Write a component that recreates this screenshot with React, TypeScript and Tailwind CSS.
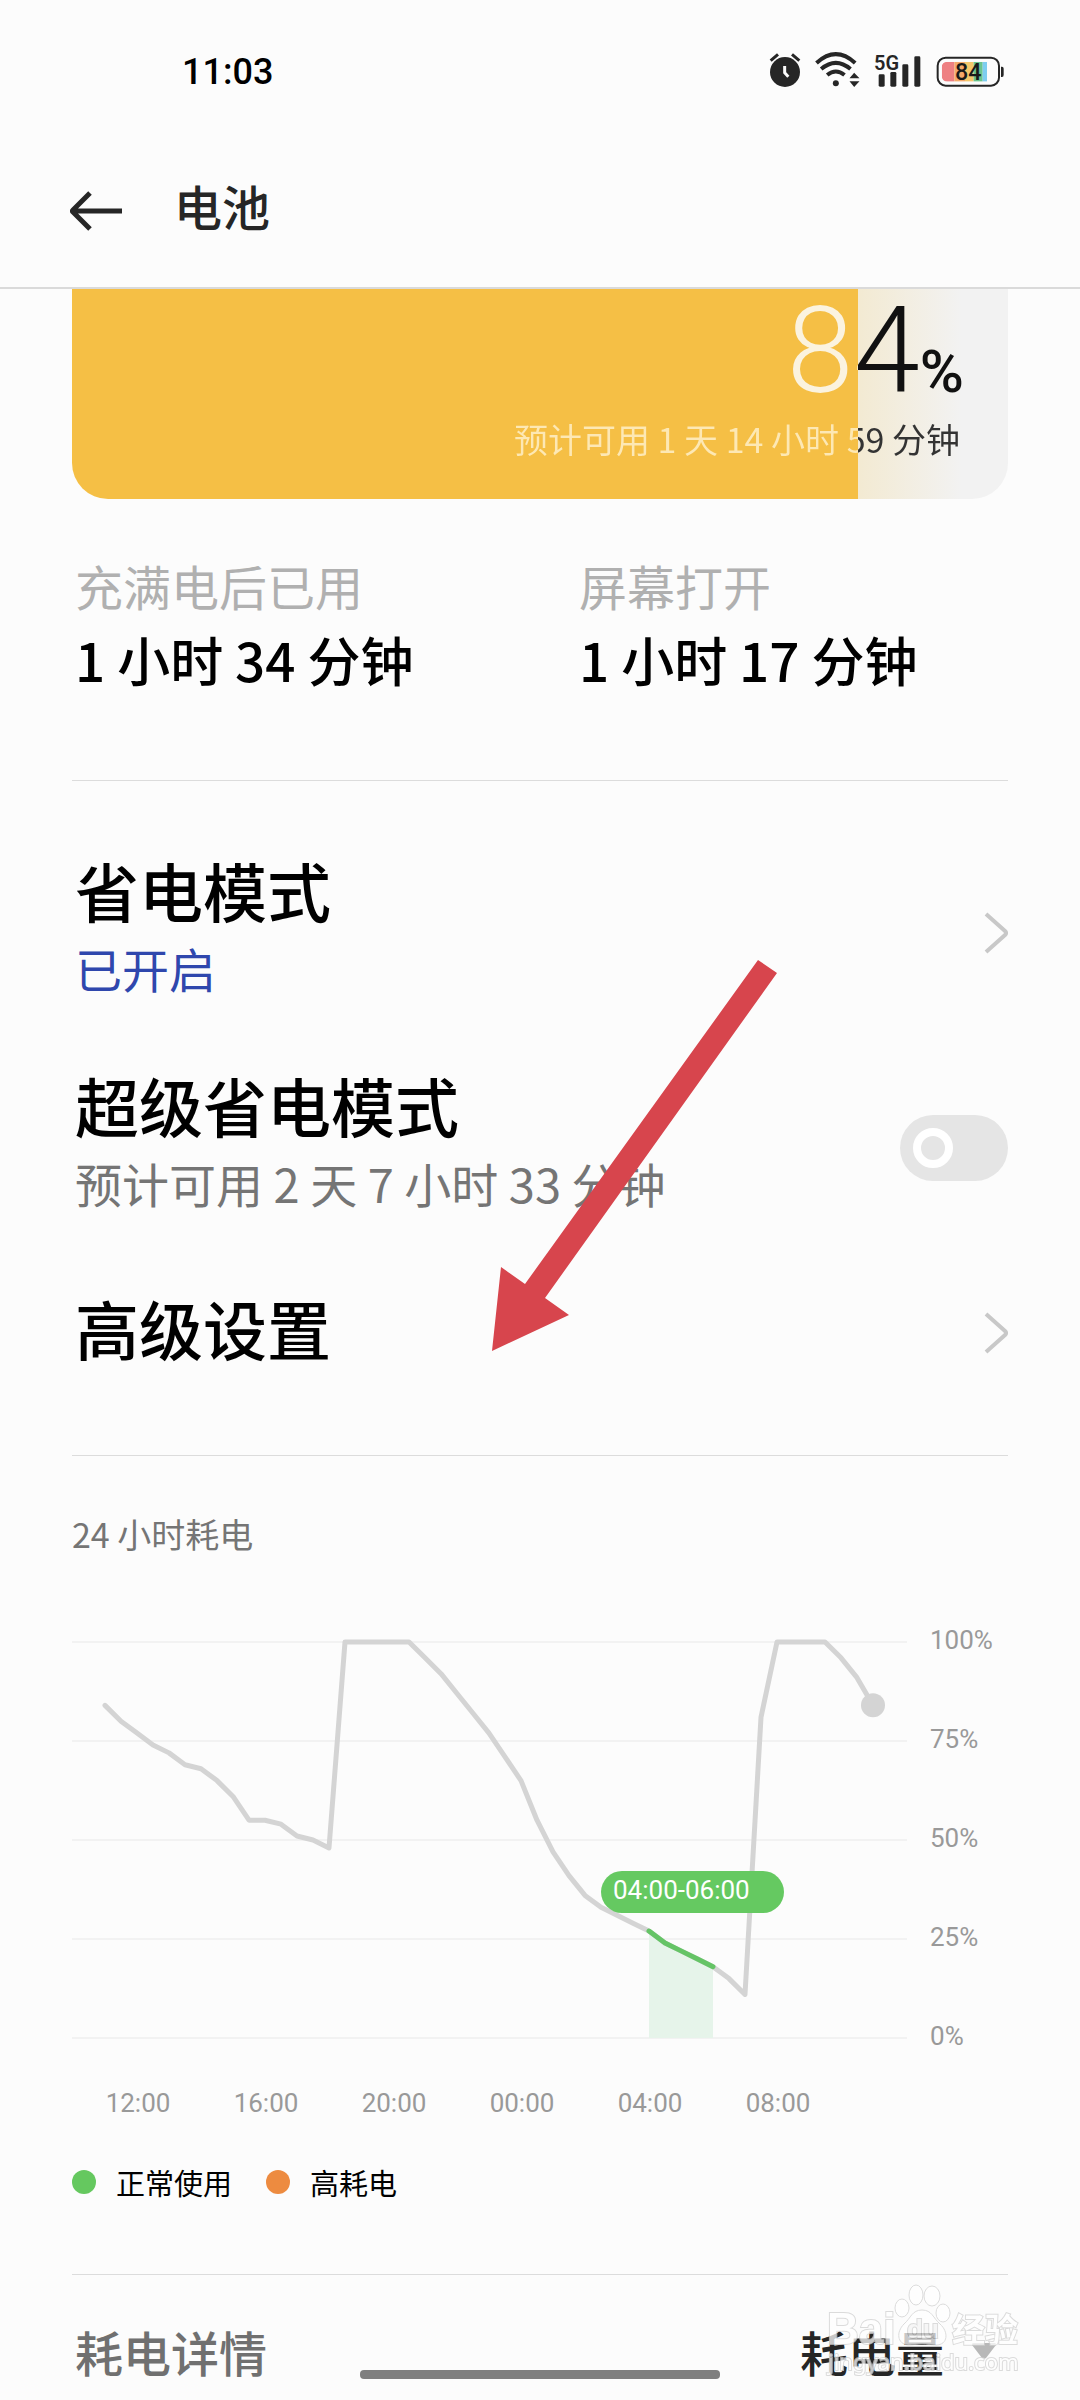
import type { ReactNode } from 'react';

type StatProps = {
	label: string;
	value: string;
};

type RowProps = {
	title: string;
	note?: string;
	noteClass?: string;
	children: ReactNode;
};

// battery level, one reading every half hour
const levels = [
	84, 80, 77, 74, 72, 69, 68, 65, 61, 55, 55, 54, 51, 50, 48, 100, 100, 100, 100, 100, 96, 92, 87, 82, 77, 71, 65, 55,
	47, 41, 36, 33, 31, 29, 27, 24, 22, 20, 18, 15, 11, 81, 100, 100, 100, 100, 96, 91, 84,
];

const hours = ['12:00', '16:00', '20:00', '00:00', '04:00', '08:00'];

const chartX = (i: number) => 33 + i * 16;
const chartY = (level: number) => 18 + (100 - level) * 3.96;
const toPoints = (from: number, to: number) =>
	levels
		.slice(from, to + 1)
		.map((level, i) => `${chartX(from + i)},${chartY(level)}`)
		.join(' ');

const AlarmIcon = () => (
	<svg viewBox="0 0 96 108" className="h-9 w-8" fill="#262626">
		<circle cx="48" cy="60" r="45" />
		<path d="M5 26 L27 7 M91 26 L69 7" stroke="#262626" strokeWidth="9" strokeLinecap="butt" />
		<path d="M47 42 V62 L58 74" fill="none" stroke="#fcfcfc" strokeWidth="9" />
	</svg>
);

const WifiIcon = () => (
	<svg viewBox="0 0 134 108" className="h-9 w-[45px]" fill="none" stroke="#262626" strokeWidth="12">
		<path d="M4 33 Q62 -20 120 33" />
		<path d="M18 51 Q62 14 106 51" />
		<path d="M36 69 Q62 48 88 69" />
		<circle cx="62" cy="94" r="9" fill="#262626" stroke="none" />
		<path d="M103 79 L117 62 L133 79 Z M103 88 L117 105 L133 88 Z" fill="#262626" stroke="none" />
	</svg>
);

const SignalIcon = () => (
	<svg viewBox="0 0 144 108" className="h-9 w-12" fill="#262626">
		<rect x="14" y="67" width="18" height="37" rx="4" />
		<rect x="49" y="60" width="18" height="44" rx="4" />
		<rect x="85" y="37" width="18" height="67" rx="4" />
		<rect x="121" y="13" width="18" height="91" rx="4" />
		<text x="0" y="54" fontSize="60" fontWeight="600" fontFamily="Roboto, sans-serif">
			5G
		</text>
	</svg>
);

const BatteryIcon = () => (
	<svg viewBox="0 0 204 108" className="h-9 w-[68px]">
		<defs>
			<clipPath id="charge">
				<rect x="17" y="29" width="136" height="60" rx="16" />
				<rect x="100" y="29" width="53" height="60" />
			</clipPath>
		</defs>
		<g clipPath="url(#charge)">
			<rect x="17" y="29" width="38" height="60" fill="#ee8082" />
			<rect x="55" y="29" width="32" height="60" fill="#f5a96a" />
			<rect x="87" y="29" width="26" height="60" fill="#f5c76b" />
			<rect x="113" y="29" width="27" height="60" fill="#6ac48d" />
			<rect x="140" y="29" width="13" height="60" fill="#7dcdf0" />
		</g>
		<rect x="5" y="17" width="184" height="84" rx="24" fill="none" stroke="#262626" strokeWidth="6" />
		<path d="M195 44 H198 Q203 44 203 50 V68 Q203 75 198 75 H195 Z" fill="#262626" />
		<text x="97" y="84" fontSize="70" fontWeight="500" textAnchor="middle" fill="#1a1a1a" fontFamily="Roboto, sans-serif">
			84
		</text>
	</svg>
);

const ChevronIcon = () => (
	<svg viewBox="0 0 24 42" className="h-[42px] w-6" fill="none" stroke="#c8c8c8" strokeWidth="4">
		<path d="M2 2 L21 19 Q23 21 21 23 L2 40" />
	</svg>
);

const StatusBar = () => (
	<div className="flex items-center justify-between pt-12 pr-[76px] pl-[182px]">
		<span className="font-[Roboto] text-4xl leading-[48px] font-medium">11:03</span>
		<div className="flex items-center gap-3.5 pb-1">
			<AlarmIcon />
			<WifiIcon />
			<SignalIcon />
			<BatteryIcon />
		</div>
	</div>
);

const Stat = ({ label, value }: StatProps) => (
	<div className="pl-[3px]">
		<dt className="text-5xl leading-[60px] text-[#b0b0b0]">{label}</dt>
		<dd className="mt-2 text-[53px] leading-[72px] font-medium">{value}</dd>
	</div>
);

const Row = ({ title, note, noteClass, children }: RowProps) => (
	<div className="flex min-h-24 items-center justify-between pl-[3px]">
		<div>
			<h2 className="text-[64px] leading-[80px] font-medium">{title}</h2>
			{note && <p className={`mt-[3px] text-[47px] leading-[72px] ${noteClass}`}>{note}</p>}
		</div>
		<div className="flex pt-3">{children}</div>
	</div>
);

const UsageChart = () => (
	<svg viewBox="0 0 936 500" className="w-full" fontFamily="Roboto, sans-serif" fontSize="26" fill="#999999">
		{[100, 75, 50, 25, 0].map((level) => (
			<g key={level}>
				<path d={`M0 ${chartY(level)} H835`} stroke="#f2f2f2" strokeWidth="2" />
				<text x="858" y={chartY(level) + 7}>
					{level}%
				</text>
			</g>
		))}
		<polygon
			points={`${toPoints(34, 38)} ${chartX(38)},${chartY(0)} ${chartX(34)},${chartY(0)}`}
			fill="#e6f4ea"
		/>
		<g fill="none" strokeWidth="5" strokeLinecap="round" strokeLinejoin="round">
			<polyline points={toPoints(0, 48)} stroke="#d4d4d4" />
			<polyline points={toPoints(34, 38)} stroke="#65c466" />
		</g>
		<circle cx={chartX(48)} cy={chartY(84)} r="12" fill="#d4d4d4" />
		<rect x="529" y="247" width="183" height="42" rx="21" fill="#65c961" />
		<text x="541" y="275" fill="#ffffff">
			04:00-06:00
		</text>
		{hours.map((hour, i) => (
			<text key={hour} x={chartX(2 + i * 8) + 1} y="488" textAnchor="middle">
				{hour}
			</text>
		))}
	</svg>
);

const Watermark = () => (
	<svg
		viewBox="0 0 210 100"
		className="absolute right-[50px] bottom-5 h-[100px] w-[210px] opacity-75"
		fill="#ffffff"
		stroke="#d0d0d0"
		strokeWidth="2"
		fontFamily="'Liberation Sans', 'Noto Sans CJK SC', sans-serif">
		<text x="7" y="64" fontSize="44" fontWeight="700" paintOrder="stroke">
			Bai
		</text>
		<ellipse cx="82" cy="28" rx="7" ry="9" strokeWidth="1" />
		<ellipse cx="96" cy="15" rx="7" ry="10" strokeWidth="1" />
		<ellipse cx="112" cy="16" rx="8" ry="10" strokeWidth="1" />
		<ellipse cx="123" cy="33" rx="7" ry="9" strokeWidth="1" />
		<path
			d="M102 30 C112 30 113 38 120 44 C129 52 128 65 116 65 C110 65 108 64 102 64 C96 64 94 65 88 65 C77 64 76 52 84 44 C91 38 92 30 102 30 Z"
			strokeWidth="1"
		/>
		<text x="87" y="58" fontSize="26" fontWeight="700" fill="#f4f4f4" paintOrder="stroke">
			du
		</text>
		<text x="132" y="62" fontSize="33" fontWeight="700" paintOrder="stroke">
			经验
		</text>
		<text x="8" y="90" fontSize="22" fontFamily="'Noto Sans', sans-serif" paintOrder="stroke">
			jingyan.baidu.com
		</text>
	</svg>
);

const App = () => (
	<div className="relative min-h-[2400px] overflow-hidden bg-[#fcfcfc] font-['Noto_Sans_CJK_SC',sans-serif] text-black">
		<header className="border-b-2 border-[#dadada]">
			<StatusBar />
			<div className="flex items-center pt-[73px] pb-[46px] pl-[70px]">
				<button type="button" aria-label="返回" className="pt-3">
					<svg viewBox="0 0 52 40" className="h-10 w-[52px]" fill="none" stroke="#262626" strokeWidth="5">
						<path d="M52 20 H3 M20 2 L3 19 Q2 20 3 21 L20 38" />
					</svg>
				</button>
				<h1 className="ml-[52px] text-5xl leading-[72px] font-medium text-[#262626]">电池</h1>
			</div>
		</header>

		<main className="px-[72px]">
			<section className="rounded-b-[36px] bg-[linear-gradient(to_right,#f5bf45_84%,#f3ead2_84%,#f2f2f2_95%)] pt-0.5 pb-8 text-right">
				<p className="bg-[linear-gradient(to_right,#fbf3df_84%,#111111_84%)] bg-clip-text pr-[44px] font-[Roboto] text-[120px] leading-[120px] font-light text-transparent">
					84<span className="text-[60px] leading-none font-medium">%</span>
				</p>
				<p className="bg-[linear-gradient(to_right,#fde8b4_84%,#333333_84%)] bg-clip-text pr-[48px] text-[34px] leading-[56px] text-transparent">
					预计可用 1 天 14 小时 59 分钟
				</p>
			</section>

			<dl className="grid grid-cols-2 gap-[72px] border-b border-[#dcdcdc] pt-14 pb-[85px]">
				<Stat label="充满电后已用" value="1 小时 34 分钟" />
				<Stat label="屏幕打开" value="1 小时 17 分钟" />
			</dl>

			<section className="flex flex-col gap-[60px] border-b border-[#dcdcdc] pt-[68px] pb-20">
				<Row title="省电模式" note="已开启" noteClass="text-[#2f47ad]">
					<button type="button" aria-label="省电模式">
						<ChevronIcon />
					</button>
				</Row>
				<Row title="超级省电模式" note="预计可用 2 天 7 小时 33 分钟" noteClass="text-[#757575]">
					<label className="relative h-[66px] w-[108px] rounded-full bg-[#e5e5e5]">
						<input type="checkbox" role="switch" aria-label="超级省电模式" className="peer sr-only" />
						<span className="absolute top-[13px] left-[13px] size-10 rounded-full border-8 border-white peer-checked:left-[55px]" />
					</label>
				</Row>
				<Row title="高级设置">
					<button type="button" aria-label="高级设置">
						<ChevronIcon />
					</button>
				</Row>
			</section>

			<section className="border-b border-[#dcdcdc] pt-[54px] pb-[72px]">
				<h3 className="text-[34px] leading-[48px] text-[#757575]">24 小时耗电</h3>
				<div className="mt-[66px]">
					<UsageChart />
				</div>
				<ul className="mt-[38px] flex gap-[34px] text-[29px] leading-10">
					<li className="flex items-center gap-5">
						<span className="size-6 rounded-full bg-[#65c85f]" />
						正常使用
					</li>
					<li className="flex items-center gap-5">
						<span className="size-6 rounded-full bg-[#ed8b40]" />
						高耗电
					</li>
				</ul>
			</section>

			<section className="flex items-center justify-between pt-10 text-5xl leading-[72px] font-medium">
				<h3 className="pl-[3px] text-[#707070]">耗电详情</h3>
				<button type="button" className="flex items-center gap-7 pr-3 text-[#262626]">
					耗电量
					<svg viewBox="0 0 24 16" className="h-4 w-6" fill="#b8b8b8">
						<path d="M1 0 H23 Q24 0 24 2 L14 15 Q12 16 10 15 L0 2 Q0 0 1 0 Z" />
					</svg>
				</button>
			</section>
		</main>

		<svg viewBox="0 0 286 392" className="absolute top-[960px] left-[492px] h-[392px] w-[286px]" fill="#d7454d">
			<path d="M266 0 L285 13 L53 338 L77 355 L0 391 L9 307 L33 324 Z" />
		</svg>
		<div className="absolute bottom-[21px] left-1/2 h-[9px] w-[360px] -translate-x-1/2 rounded bg-[#7f7f7f]" />
		<Watermark />
	</div>
);

export default App;
